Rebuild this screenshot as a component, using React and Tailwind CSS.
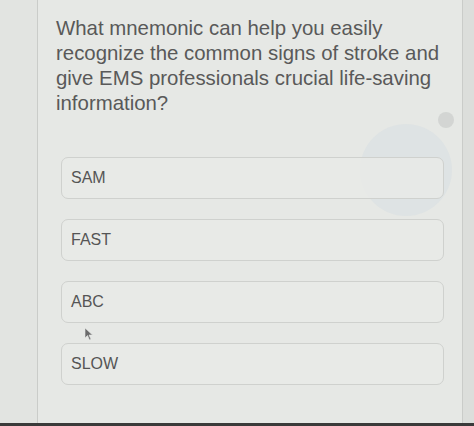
import React from "react";

const options = ["SAM", "FAST", "ABC", "SLOW"];

export default function App() {
  return (
    <div
      className="relative w-[474px] h-[426px] overflow-hidden bg-[#dfe1de] flex flex-col"
      style={{ fontFamily: '"Liberation Sans", Arial, sans-serif' }}
    >
      <div className="flex flex-1">
        <div className="w-[37px] bg-[#e2e4e1]" />
        <div className="relative w-[426px] overflow-hidden bg-[#e6e8e5] border-l border-r border-[#caccc9] pt-[16px]">
          <div className="absolute left-[322px] top-[124px] w-[92px] h-[92px] rounded-full bg-[#d9e0e2] opacity-60" />
          <div className="relative pl-[18px] pr-[10px] text-[20.4px] leading-[25px] text-[#595959]">
            What mnemonic can help you easily recognize the common signs of stroke and give EMS professionals crucial life-saving information?
          </div>
          <div className="relative mt-[41px] ml-[23px] mr-[18px] flex flex-col gap-[20px]">
            {options.map((o) => (
              <div
                key={o}
                className="h-[42px] rounded-[7px] border border-[#cfd1ce] bg-[#e8eae7]/80 flex items-center pl-[9px] text-[16px] text-[#555555]"
              >
                {o}
              </div>
            ))}
          </div>
          <div className="absolute left-[400px] top-[112px] w-[16px] h-[16px] rounded-full bg-[#d3d5d3]" />
          <svg
            className="absolute left-[46px] top-[327px]"
            width="10"
            height="14"
            viewBox="0 0 10 14"
          >
            <path d="M1 1 L1 11 L3.5 8.5 L5.5 13 L7 12.3 L5 8 L8.5 8 Z" fill="#6b6b6b" stroke="#e6e8e5" strokeWidth="0.6" />
          </svg>
        </div>
        <div className="flex-1 bg-[#dcdedb]" />
      </div>
      <div className="h-[3px] bg-[#3a3a3a]" />
    </div>
  );
}
